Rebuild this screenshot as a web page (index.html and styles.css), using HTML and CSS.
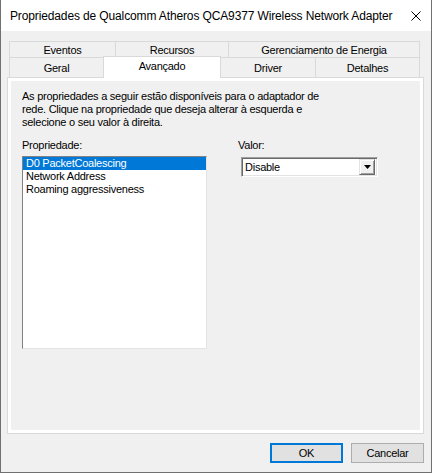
FILE: index.html
```html
<!DOCTYPE html>
<html>
<head>
<meta charset="utf-8">
<link rel="stylesheet" href="styles.css">
</head>
<body>
<div class="window">
  <div class="titlebar">
    <span class="title">Propriedades de Qualcomm Atheros QCA9377 Wireless Network Adapter</span>
    <svg class="close" width="10" height="10" viewBox="0 0 10 10"><path d="M0.5 0.5 L9.5 9.5 M9.5 0.5 L0.5 9.5" stroke="#000" stroke-width="1" fill="none"/></svg>
  </div>
  <div class="client">
    <div class="tabs">
      <div class="tabrow row1">
        <div class="tab w-eventos">Eventos</div>
        <div class="tab w-recursos">Recursos</div>
        <div class="tab w-energia last">Gerenciamento de Energia</div>
      </div>
      <div class="tabrow row2">
        <div class="tab w-geral">Geral</div>
        <div class="tab w-avancado selected">Avançado</div>
        <div class="tab w-driver">Driver</div>
        <div class="tab w-detalhes last">Detalhes</div>
      </div>
    </div>
    <div class="panel">
      <div class="panel-inner">
        <p class="desc">As propriedades a seguir estão disponíveis para o adaptador de<br>rede. Clique na propriedade que deseja alterar à esquerda e<br>selecione o seu valor à direita.</p>
        <div class="fields">
          <div class="col-prop">
            <div class="label">Propriedade:</div>
            <div class="listbox">
              <div class="item sel">D0 PacketCoalescing</div>
              <div class="item">Network Address</div>
              <div class="item">Roaming aggressiveness</div>
            </div>
          </div>
          <div class="col-val">
            <div class="label">Valor:</div>
            <div class="combo">
              <span class="combo-text">Disable</span>
              <span class="combo-btn"><svg width="7" height="4" viewBox="0 0 7 4"><path d="M0 0 H7 L3.5 4 Z" fill="#000"/></svg></span>
            </div>
          </div>
        </div>
      </div>
    </div>
    <div class="buttons">
      <div class="btn default">OK</div>
      <div class="btn">Cancelar</div>
    </div>
  </div>
</div>
</body>
</html>
```

FILE: styles.css
```css
html, body {
  margin: 0;
  padding: 0;
  background: #f0f0f0;
}
.window {
  width: 432px;
  height: 473px;
  box-sizing: border-box;
  border: 1px solid #707070;
  border-top: none;
  display: flex;
  flex-direction: column;
  font-family: "Liberation Sans", Arial, sans-serif;
  font-size: 11px;
  letter-spacing: -0.25px;
  color: #000;
}
.titlebar {
  height: 31px;
  flex: none;
  background: #fff;
  display: flex;
  align-items: center;
  padding-left: 9px;
  padding-right: 10px;
  justify-content: space-between;
}
.title {
  font-size: 12px;
  letter-spacing: -0.13px;
  margin-top: 1px;
}
.close {
  display: block;
}
.client {
  flex: 1;
  background: #f0f0f0;
  padding: 10px 7px 9px 6px;
  display: flex;
  flex-direction: column;
}
.tabs {
  margin: 0 3px 0 2px;
  position: relative;
  z-index: 1;
}
.tabrow {
  display: flex;
}
.tab {
  box-sizing: border-box;
  border-top: 1px solid #d9d9d9;
  border-left: 1px solid #d9d9d9;
  background: #f0f0f0;
  text-align: center;
}
.tab.last {
  border-right: 1px solid #d9d9d9;
}
.row1 .tab {
  height: 16px;
  line-height: 16px;
}
.row2 {
  height: 20px;
}
.row2 .tab {
  height: 20px;
  line-height: 20px;
}
.w-eventos { width: 106px; }
.w-recursos { width: 113px; }
.w-energia { width: 192px; }
.w-geral { width: 94px; }
.w-avancado { width: 118px; }
.w-driver { width: 94px; }
.w-detalhes { width: 105px; }
.tab.selected {
  background: #fff;
  border: 1px solid #d9d9d9;
  border-bottom: none;
  height: 22px;
  line-height: 18px;
  margin-top: -1px;
  position: relative;
}
.tab.selected + .tab {
  border-left: none;
}
.panel {
  height: 357px;
  box-sizing: border-box;
  border: 1px solid #d9d9d9;
  background: #fff;
  padding: 3px;
}
.panel-inner {
  background: #f0f0f0;
  height: 100%;
  box-sizing: border-box;
  padding: 9px 11px 0 11px;
}
.desc {
  margin: 0;
  line-height: 13px;
}
.fields {
  display: flex;
  margin-top: 10px;
}
.label {
  line-height: 13px;
}
.col-prop {
  width: 185px;
}
.listbox {
  margin-top: 4px;
  height: 193px;
  box-sizing: border-box;
  background: #fff;
  border-top: 1px solid #828282;
  border-left: 1px solid #828282;
  border-right: 1px solid #e3e3e3;
  border-bottom: 1px solid #e3e3e3;
  padding: 0;
}
.item {
  height: 13px;
  line-height: 13px;
  padding-left: 3px;
}
.item.sel {
  background: #0078d7;
  color: #fff;
}
.col-val {
  margin-left: 31px;
}
.combo {
  margin-top: 5px;
  margin-left: 3px;
  width: 137px;
  height: 20px;
  box-sizing: border-box;
  background: #fff;
  border-top: 1px solid #a0a0a0;
  border-left: 1px solid #a0a0a0;
  border-right: 1px solid #fff;
  border-bottom: 1px solid #fff;
  box-shadow: inset 1px 1px 0 #696969, inset -1px -1px 0 #e3e3e3;
  display: flex;
  align-items: center;
  justify-content: space-between;
  padding: 2px 2px 2px 3px;
}
.combo-text {
  line-height: 14px;
}
.combo-btn {
  width: 16px;
  height: 16px;
  box-sizing: border-box;
  background: #f0f0f0;
  border-top: 1px solid #e3e3e3;
  border-left: 1px solid #e3e3e3;
  border-right: 1px solid #696969;
  border-bottom: 1px solid #696969;
  box-shadow: inset 1px 1px 0 #fff, inset -1px -1px 0 #a0a0a0;
  display: flex;
  align-items: center;
  justify-content: center;
}
.combo-btn svg {
  display: block;
}
.buttons {
  display: flex;
  justify-content: flex-end;
  gap: 8px;
  margin-top: 9px;
}
.btn {
  width: 73px;
  height: 20px;
  box-sizing: border-box;
  background: #e1e1e1;
  border: 1px solid #adadad;
  text-align: center;
  line-height: 18px;
}
.btn.default {
  border: 2px solid #0078d7;
  line-height: 16px;
}
```
